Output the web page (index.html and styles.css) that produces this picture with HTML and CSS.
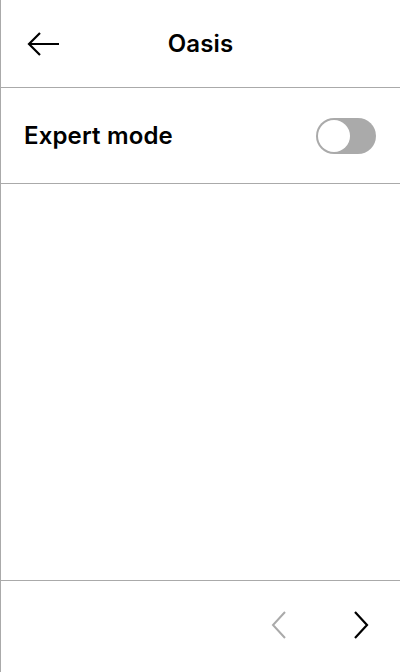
FILE: index.html
```html
<!DOCTYPE html>
<html>
<head>
<meta charset="utf-8">
<link rel="stylesheet" href="styles.css">
</head>
<body>
<div class="screen">
  <header class="header">
    <button class="back" aria-label="Back">
      <svg width="34" height="26" viewBox="0 0 34 26"><path d="M33 13H3M14 2L3 13l11 11" fill="none" stroke="#000" stroke-width="2.2" stroke-linejoin="miter"/></svg>
    </button>
    <h1 class="title">Oasis</h1>
    <span class="spacer"></span>
  </header>
  <div class="row">
    <span class="label">Expert mode</span>
    <span class="toggle"><span class="knob"></span></span>
  </div>
  <main class="content"></main>
  <footer class="footer">
    <svg class="chev" width="16" height="28" viewBox="0 0 16 28"><path d="M14 1L2 14l12 13" fill="none" stroke="#aaa" stroke-width="2"/></svg>
    <svg class="chev" width="16" height="28" viewBox="0 0 16 28"><path d="M2 1l12 13L2 27" fill="none" stroke="#000" stroke-width="2.2"/></svg>
  </footer>
</div>
</body>
</html>
```

FILE: styles.css
```css
html, body {
  margin: 0;
  padding: 0;
  background: #fff;
}
body {
  font-family: Inter, "Noto Sans", sans-serif;
  color: #000;
}
.screen {
  width: 400px;
  height: 672px;
  box-sizing: border-box;
  border-left: 1px solid #aaa;
  display: flex;
  flex-direction: column;
}
.header {
  height: 88px;
  box-sizing: border-box;
  border-bottom: 1px solid #aaa;
  display: flex;
  align-items: center;
  padding: 0 24px 0 25px;
}
.back {
  border: 0;
  background: none;
  padding: 0;
  width: 34px;
  height: 26px;
  display: flex;
}
.title {
  flex: 1;
  text-align: center;
  margin: 0;
  font-size: 24px;
  font-weight: 600;
  line-height: 30px;
  letter-spacing: 0.1px;
}
.spacer {
  width: 35px;
}
.row {
  height: 96px;
  box-sizing: border-box;
  border-bottom: 1px solid #aaa;
  display: flex;
  align-items: center;
  justify-content: space-between;
  padding: 0 24px 0 23px;
}
.label {
  font-size: 24px;
  font-weight: 600;
  line-height: 30px;
  letter-spacing: 0.15px;
}
.toggle {
  width: 60px;
  height: 36px;
  border-radius: 18px;
  background: #aaa;
  box-sizing: border-box;
  padding: 2px;
  display: flex;
  align-items: center;
}
.knob {
  width: 32px;
  height: 32px;
  border-radius: 50%;
  background: #fff;
}
.content {
  flex: 1;
  border-bottom: 1px solid #aaa;
}
.footer {
  height: 91px;
  display: flex;
  align-items: center;
  justify-content: flex-end;
  gap: 66px;
  padding: 0 31px 3px 0;
  box-sizing: border-box;
}
```
